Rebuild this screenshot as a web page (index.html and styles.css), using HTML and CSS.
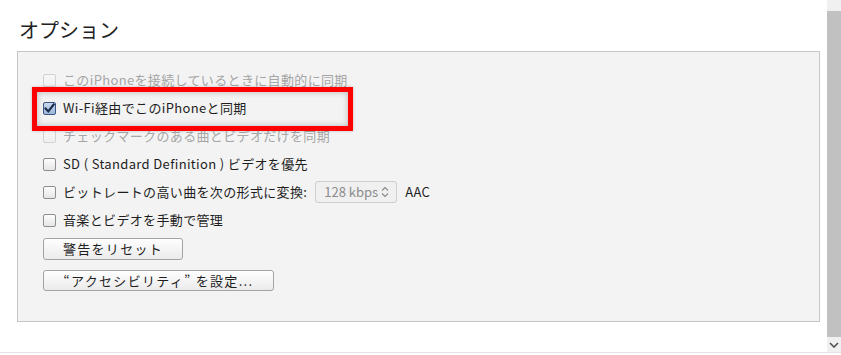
FILE: index.html
```html
<!DOCTYPE html>
<html lang="ja">
<head>
<meta charset="utf-8">
<link rel="stylesheet" href="styles.css">
</head>
<body>
<div class="page">
  <div class="main">
    <h1 class="title">オプション</h1>
    <div class="panel">
      <div class="row disabled"><span class="cb"></span><span>このiPhoneを接続しているときに自動的に同期</span></div>
      <div class="row"><span class="cb checked"><svg viewBox="0 0 13 13" width="13" height="13"><path d="M2.6 6.6 L5.3 9.4 L10.6 2.6" fill="none" stroke="#1c2f4f" stroke-width="2.2" stroke-linecap="square" stroke-linejoin="miter"/></svg></span><span>Wi-Fi経由でこのiPhoneと同期</span></div>
      <div class="row disabled"><span class="cb"></span><span>チェックマークのある曲とビデオだけを同期</span></div>
      <div class="row"><span class="cb"></span><span>SD ( Standard Definition ) ビデオを優先</span></div>
      <div class="row"><span class="cb"></span><span>ビットレートの高い曲を次の形式に変換:</span>
        <span class="select"><span>128 kbps</span><svg class="updown" viewBox="0 0 8 12" width="8" height="12"><path d="M1 4.5 L4 1.5 L7 4.5 M1 7.5 L4 10.5 L7 7.5" fill="none" stroke="#8a8a8a" stroke-width="1.1"/></svg></span>
        <span class="aac">AAC</span></div>
      <div class="row"><span class="cb"></span><span>音楽とビデオを手動で管理</span></div>
      <div class="buttons">
        <button class="btn btn-reset">警告をリセット</button>
        <button class="btn btn-access">“アクセシビリティ” を設定...</button>
      </div>
      <div class="highlight"></div>
    </div>
  </div>
  <div class="scrollbar">
    <div class="sb-up"></div>
    <div class="sb-thumb"></div>
    <div class="sb-down"><svg viewBox="0 0 10 6" width="10" height="6"><path d="M1 1 L5 5 L9 1" fill="none" stroke="#505050" stroke-width="1.6"/></svg></div>
  </div>
</div>
</body>
</html>
```

FILE: styles.css
```css
html, body {
  margin: 0;
  padding: 0;
  background: #ffffff;
}
body {
  width: 841px;
  height: 355px;
  overflow: hidden;
  font-family: "Noto Sans CJK JP", "Noto Sans", sans-serif;
  color: #1e1e1e;
}
.page {
  display: flex;
  height: 352px;
  border-bottom: 1px solid #e3e3e3;
}
.main {
  flex: 1;
  padding-left: 17px;
}
.title {
  margin: 17px 0 0 2px;
  height: 34px;
  font-size: 20px;
  font-weight: normal;
  line-height: 26px;
  letter-spacing: 0;
  color: #222;
}
.panel {
  position: relative;
  width: 801px;
  height: 269px;
  background: #f3f3f3;
  border: 1px solid #c6c6c6;
  box-sizing: content-box;
  padding: 0;
}
.panel > .row:first-child {
  margin-top: 14px;
}
.row {
  display: flex;
  align-items: center;
  height: 28px;
  padding-left: 25px;
  font-size: 13px;
  line-height: 16px;
  letter-spacing: 0.35px;
  color: #1e1e1e;
}
.row.disabled {
  color: #a6a6a6;
}
.cb {
  width: 11px;
  height: 11px;
  border: 1px solid #8e8e8e;
  border-radius: 2px;
  background: linear-gradient(#fdfdfd, #e6e6e6);
  margin-right: 7px;
  flex: none;
  position: relative;
}
.row.disabled .cb {
  border-color: #d2d2d2;
  background: linear-gradient(#f7f7f7, #efefef);
}
.cb.checked {
  border-color: #3a5683;
  background: linear-gradient(#c9d8ee, #9fb7dc);
}
.cb.checked svg {
  position: absolute;
  left: -1px;
  top: -1px;
}
.select {
  display: inline-flex;
  align-items: center;
  justify-content: space-between;
  box-sizing: border-box;
  width: 82px;
  height: 22px;
  margin-left: 8px;
  padding: 0 7px 0 8px;
  border: 1px solid #cfcfcf;
  border-radius: 3px;
  background: #f0f0f0;
  color: #8c8c8c;
  font-size: 13px;
  letter-spacing: 0;
}
.aac {
  margin-left: 8px;
}
.buttons {
  display: flex;
  flex-direction: column;
  align-items: flex-start;
  gap: 10px;
  padding: 4px 0 0 25px;
}
.btn {
  font-family: "Noto Sans CJK JP", "Noto Sans", sans-serif;
  font-size: 13px;
  line-height: 16px;
  color: #1e1e1e;
  border: 1px solid #a3a3a3;
  border-radius: 3px;
  background: linear-gradient(#fefefe, #ebebeb);
  padding: 0;
  margin: 0;
  letter-spacing: 1.3px;
}
.btn-reset {
  width: 140px;
  height: 22px;
}
.btn-access {
  width: 231px;
  height: 21px;
}
.highlight {
  position: absolute;
  left: 14px;
  top: 35px;
  width: 311px;
  height: 34px;
  border: 5px solid #ff0000;
  box-shadow: inset 0 0 6px rgba(0, 0, 0, 0.25), 0 0 3px rgba(0, 0, 0, 0.2);
}
.scrollbar {
  width: 14px;
  display: flex;
  flex-direction: column;
  background: #f0f0f0;
}
.sb-up {
  height: 11px;
}
.sb-thumb {
  flex: 1;
  background: #c1c1c1;
}
.sb-down {
  height: 15px;
  display: flex;
  align-items: center;
  justify-content: center;
}
```
